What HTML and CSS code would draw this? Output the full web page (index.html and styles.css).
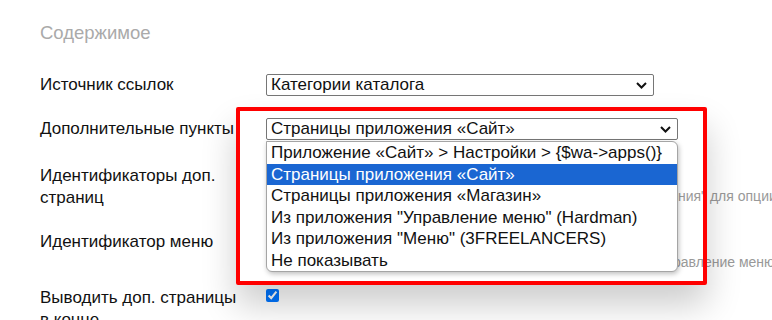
FILE: index.html
```html
<!DOCTYPE HTML>
<html>

<head>
  <meta charset="UTF-8">
  <title>Содержимое</title>
  <link rel="stylesheet" href="styles.css">
</head>

<body>
  <div class="settings">
    <h2 class="settings-title">Содержимое</h2>

    <div class="field field-first">
      <div class="field-name">Источник ссылок</div>
      <div class="field-value">
        <div class="select select-short">
          <span class="select-text">Категории каталога</span>
          <svg class="select-arrow" width="11" height="7" viewBox="0 0 11 7"><path d="M1 1 L5.5 5.5 L10 1" fill="none" stroke="#111" stroke-width="2"/></svg>
        </div>
      </div>
    </div>

    <div class="field">
      <div class="field-name">Дополнительные пункты</div>
      <div class="field-value">
        <div class="select-wrap">
          <div class="select select-long">
            <span class="select-text">Страницы приложения «Сайт»</span>
            <svg class="select-arrow" width="11" height="7" viewBox="0 0 11 7"><path d="M1 1 L5.5 5.5 L10 1" fill="none" stroke="#111" stroke-width="2"/></svg>
          </div>
          <ul class="options">
            <li>Приложение «Сайт» &gt; Настройки &gt; {$wa-&gt;apps()}</li>
            <li class="selected">Страницы приложения «Сайт»</li>
            <li>Страницы приложения «Магазин»</li>
            <li>Из приложения "Управление меню" (Hardman)</li>
            <li>Из приложения "Меню" (3FREELANCERS)</li>
            <li>Не показывать</li>
          </ul>
        </div>
      </div>
    </div>

    <div class="field field-ids">
      <div class="field-name">Идентификаторы доп. страниц</div>
      <div class="field-value">
        <input class="text-input" type="text">
        <div class="hint">Через запятую. Работает при выборе типа "Страницы приложения" для опции "Дополнительные пункты"</div>
      </div>
    </div>

    <div class="field field-menu">
      <div class="field-name">Идентификатор меню</div>
      <div class="field-value">
        <input class="text-input" type="text">
        <div class="hint">Заполняется только при выборе значения "Из приложения "Управление меню"" для опции</div>
      </div>
    </div>

    <div class="field field-end">
      <div class="field-name">Выводить доп. страницы в конце</div>
      <div class="field-value">
        <input class="checkbox" type="checkbox" checked>
      </div>
    </div>
  </div>

  <div class="highlight"></div>
</body>

</html>
```
FILE: styles.css
```css
html, body {
  margin: 0;
  padding: 0;
  overflow: hidden;
  background: #fff;
}

body {
  font-family: "Liberation Sans", Arial, sans-serif;
  font-size: 17px;
  color: #111;
}

.settings {
  padding-left: 40px;
}

.settings-title {
  margin: 22px 0 0;
  font-size: 18.5px;
  font-weight: normal;
  line-height: 22px;
  color: #aaa;
}

.field {
  display: flex;
  margin-top: 22px;
}

.field-first {
  margin-top: 30px;
}

.field-ids {
  margin-top: 25px;
}

.field-end {
  margin-top: 16px;
}

.field-name {
  width: 200px;
  margin-right: 26px;
  line-height: 22px;
  flex-shrink: 0;
}

.field-value {
  flex: 1;
  min-width: 0;
}

.select-wrap {
  position: relative;
  width: 412px;
}

.select {
  display: flex;
  align-items: center;
  justify-content: space-between;
  height: 22px;
  box-sizing: border-box;
  border: 1px solid #767676;
  border-radius: 2px;
  padding: 0 6px 0 4px;
  background: #fff;
}

.select-short {
  width: 388px;
}

.select-long {
  width: 412px;
}

.select-text {
  line-height: 20px;
  white-space: nowrap;
}

.options {
  position: absolute;
  top: 23px;
  left: 0;
  z-index: 2;
  width: 412px;
  box-sizing: border-box;
  margin: 0;
  padding: 0;
  list-style: none;
  background: #fff;
  border: 1px solid #a5a5a5;
  border-radius: 0 6px 6px 6px;
  box-shadow: 1px 2px 5px rgba(0, 0, 0, 0.25);
  overflow: hidden;
}

.options li {
  height: 21.5px;
  line-height: 21px;
  padding-left: 4px;
  white-space: nowrap;
}

.options .selected {
  background: #1a66d2;
  color: #fff;
}

.text-input {
  display: block;
  width: 400px;
  height: 22px;
  box-sizing: border-box;
  margin: 0;
  border: 1px solid #767676;
}

.hint {
  font-size: 14px;
  line-height: 18px;
  color: #999;
  white-space: nowrap;
}

.checkbox {
  margin: 1px 0 0;
  width: 13px;
  height: 13px;
}

.highlight {
  position: absolute;
  left: 236px;
  top: 107px;
  width: 463px;
  height: 170px;
  border: 4px solid #ff0000;
  border-radius: 2px;
  z-index: 3;
  box-shadow: 0 20px 35px rgba(0, 0, 0, 0.2);
}
```
